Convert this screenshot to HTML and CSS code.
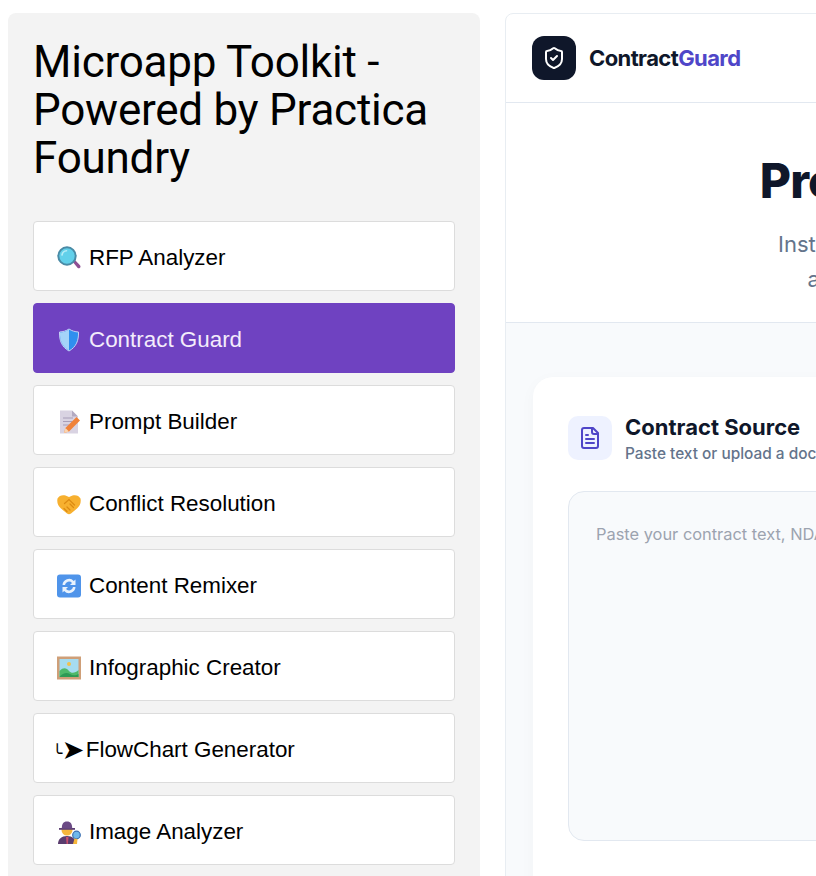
FILE: index.html
```html
<!DOCTYPE html>
<html lang="en">
<head>
<meta charset="utf-8">
<title>Microapp Toolkit</title>
<link rel="stylesheet" href="styles.css">
</head>
<body>
<div class="page">
  <aside class="sidebar">
    <h1 class="side-title">Microapp Toolkit - Powered by Practica Foundry</h1>
    <nav class="tools">
      <a class="tool">
        <svg class="emoji" viewBox="0 0 24 24"><path d="M15 15l2-2 6 6.200c.7.800.6 1.800 0 2.500-.8.700-1.800.7-2.500 0z" fill="#8e4f93"/><circle cx="10" cy="10" r="8.700" fill="#62d0ea" stroke="#4a8ba6" stroke-width="2"/><path d="M5 9c.5-2.500 2.300-4 4.500-4.200" fill="none" stroke="#b5ecf7" stroke-width="1.600" stroke-linecap="round"/></svg>
        <span>RFP Analyzer</span>
      </a>
      <a class="tool active">
        <svg class="emoji" viewBox="0 0 24 24"><path d="M12 1c3 2 6 2.800 9.500 3 .3 8.500-2.300 15-9.500 19C4.800 19 2.200 12.500 2.500 4 6 3.800 9 3 12 1z" fill="#2f8fef" stroke="#c3cff5" stroke-width="1"/><path d="M12 1.500C9 3.400 6 4.300 3 4.500c-.3 8 2.400 14.300 9 18z" fill="#a5d3f9"/></svg>
        <span>Contract Guard</span>
      </a>
      <a class="tool">
        <svg class="emoji" viewBox="0 0 24 24"><path d="M3 .5h12l6 6v17H3z" fill="#d9d3e2"/><path d="M15 .5l6 6h-6z" fill="#b3aac2"/><path d="M6 8h10M6 11.500h9M6 15h6" stroke="#a79db8" stroke-width="1.200"/><path d="M7 23l1.400-5L19.500 7l3.500 3.500L12 21.600z" fill="#f0823a"/><path d="M7 23l1.400-5 3.600 3.600z" fill="#fbd5b0"/></svg>
        <span>Prompt Builder</span>
      </a>
      <a class="tool">
        <svg class="emoji" viewBox="0 0 24 24"><path d="M.5 6.500C2 3.500 5.500 2.500 8.500 3.500L12 5l3.500-1.500c3-1 6.500 0 8 3 .8 4-.5 7.500-3.500 10l-6 5c-1.300 1-2.700 1-4 0l-6-5C1 14 -.3 10.500.5 6.500z" fill="#f7b02f"/><path d="M7.500 11.500L12 7.500l5.500 5.500M10 15l3 3M7 16.500l3 3M13 12l3.500 3.500" fill="none" stroke="#dc8a12" stroke-width="1.200" stroke-linecap="round"/></svg>
        <span>Conflict Resolution</span>
      </a>
      <a class="tool">
        <svg class="emoji" viewBox="0 0 24 24"><rect x="0" y=".5" width="24" height="23" rx="3" fill="#4f94ea"/><path d="M5.500 11a6.500 6.500 0 0 1 11.300-4L18.500 5.500V11h-5.500l2-2A4 4 0 0 0 8 11z" fill="#e8f2fd"/><path d="M18.500 13a6.500 6.500 0 0 1-11.300 4l-1.700 1.500V13H11l-2 2a4 4 0 0 0 7-2z" fill="#e8f2fd"/></svg>
        <span>Content Remixer</span>
      </a>
      <a class="tool">
        <svg class="emoji" viewBox="0 0 24 24"><rect x="0" y=".5" width="24" height="23" fill="#cf9f78"/><rect x="2.500" y="3" width="19" height="18" fill="#a6dcf0"/><circle cx="12" cy="8" r="2" fill="#f3c04d"/><path d="M2.500 15c4-4 7-3 9.500 0s6.500 2 9.500-1v7h-19z" fill="#4fb96a"/><path d="M2.500 21c3-4 7.500-5 10.500-3s6 1.500 8.500 0v3z" fill="#2e9a55"/></svg>
        <span>Infographic Creator</span>
      </a>
      <a class="tool plain"><span class="hook">╰</span><span class="arrow">➤</span><span>FlowChart Generator</span></a>
      <a class="tool">
        <svg class="emoji" viewBox="0 0 24 24"><path d="M1 24c0-5 3.500-8 9-8s9 3 9 8z" fill="#5a3d6e"/><path d="M9 17h2.500l-.6 7H9.600z" fill="#c94f6d"/><circle cx="10" cy="10" r="5.500" fill="#f6b73c"/><path d="M2 8h16v1.800H2z" fill="#5c3f73"/><path d="M4.800 8.500c0-4.500 1.500-7 5.200-7s5.200 2.500 5.200 7z" fill="#6b4a85"/><circle cx="19.500" cy="15" r="3.800" fill="#6fb8ea" stroke="#3b6fb0" stroke-width="1.200"/><path d="M17.500 18.500l-1.500 5.500h4l.5-5z" fill="#f6b73c"/></svg>
        <span>Image Analyzer</span>
      </a>
    </nav>
  </aside>

  <main class="panel">
    <header class="topbar">
      <div class="logo">
        <svg class="logo-icon" viewBox="0 0 24 24" fill="none" stroke="#fff" stroke-width="2" stroke-linecap="round" stroke-linejoin="round"><path d="M20 13c0 5-3.500 7.500-7.660 8.950a1 1 0 0 1-.67-.01C7.500 20.500 4 18 4 13V6a1 1 0 0 1 1-1c2 0 4.500-1.200 6.240-2.720a1.170 1.170 0 0 1 1.520 0C14.510 3.810 17 5 19 5a1 1 0 0 1 1 1z"/><path d="M9 12l2 2 4-4"/></svg>
      </div>
      <div class="brand">Contract<span class="brand-accent">Guard</span></div>
    </header>
    <section class="hero">
      <h2 class="hero-title">Protect your contracts</h2>
      <p class="hero-sub">Instantly review contracts, spot hidden terms,<br>and get clear, actionable improvements.</p>
    </section>
    <section class="workspace">
      <div class="card">
        <div class="card-head">
          <div class="card-icon">
            <svg viewBox="0 0 24 24" fill="none" stroke="#4f46c8" stroke-width="2" stroke-linecap="round" stroke-linejoin="round"><path d="M15 2H6a2 2 0 0 0-2 2v16a2 2 0 0 0 2 2h12a2 2 0 0 0 2-2V7z"/><path d="M14 2v4a2 2 0 0 0 2 2h4"/><path d="M10 9H8M16 13H8M16 17H8"/></svg>
          </div>
          <div class="card-copy">
            <div class="card-title">Contract Source</div>
            <div class="card-sub">Paste text or upload a document to begin the analysis</div>
          </div>
        </div>
        <textarea class="source" placeholder="Paste your contract text, NDA, or agreement here..."></textarea>
      </div>
    </section>
  </main>
</div>
</body>
</html>
```

FILE: styles.css
```css
* { box-sizing: border-box; }
html, body { margin: 0; height: 100%; overflow: hidden; background: #fff; }
.page {
  display: flex;
  align-items: flex-start;
  gap: 25px;
  width: 1800px;
  padding: 13px 8px 0;
}
.sidebar {
  flex: none;
  width: 472px;
  height: 1000px;
  padding: 25px 25px 25px;
  background: #f3f3f3;
  border-radius: 8px;
}
.side-title {
  margin: 0 0 39px;
  font: 400 44px/48px Roboto, sans-serif;
  letter-spacing: -0.24px;
  color: #000;
}
.tools { display: flex; flex-direction: column; gap: 12px; }
.tool {
  display: flex;
  align-items: center;
  gap: 8px;
  height: 70px;
  padding: 3px 23px 0;
  background: #fff;
  border: 1px solid #dcdcdc;
  border-radius: 4px;
  font: 400 22.4px "Liberation Sans", Arial, sans-serif;
  color: #000;
}
.tool.active { background: #6f42c1; border-color: #6f42c1; color: #f3ecfb; }
.tool.plain { gap: 0; }
.hook { font-size: 17px; margin-top: 6px; font-family: "DejaVu Sans", sans-serif; margin-left: -5px; letter-spacing: -0.5px; }
.arrow { font-size: 27px; font-family: "DejaVu Sans", sans-serif; width: 24px; }
.emoji { flex: none; width: 24px; height: 24px; }
.panel {
  flex: none;
  width: 1020px;
  height: 1000px;
  background: #fff;
  border: 1px solid #e8edf2;
  border-radius: 8px;
  overflow: hidden;
  font-family: Inter, sans-serif;
}
.topbar {
  display: flex;
  align-items: center;
  gap: 13px;
  height: 89px;
  padding: 0 26px;
  border-bottom: 1px solid #e2e8f0;
}
.logo {
  display: flex;
  align-items: center;
  justify-content: center;
  width: 44px;
  height: 44px;
  background: #0f172a;
  border-radius: 12px;
}
.logo-icon { width: 24px; height: 24px; }
.brand { font-size: 22px; font-weight: 700; letter-spacing: -0.6px; color: #0f172a; }
.brand-accent { color: #4f46c8; }
.hero {
  height: 220px;
  padding-top: 48px;
  text-align: center;
  border-bottom: 1px solid #e2e8f0;
}
.hero-title { margin: 0 0 16px; font-size: 48px; line-height: 60px; font-weight: 800; letter-spacing: -1px; color: #0f172a; }
.hero-sub { margin: 0; font-size: 22px; line-height: 35px; color: #64748b; }
.workspace { padding: 54px 27px; background: #f8fafc; height: 700px; }
.card {
  padding: 39px 35px;
  height: 640px;
  background: #fff;
  border-radius: 20px;
  box-shadow: 0 4px 16px rgba(15, 23, 42, 0.03);
}
.card-head { display: flex; align-items: flex-start; gap: 13px; height: 44px; }
.card-icon {
  display: flex;
  align-items: center;
  justify-content: center;
  width: 44px;
  height: 44px;
  background: #eef2ff;
  border-radius: 10px;
}
.card-icon svg { width: 24px; height: 24px; }
.card-copy { margin-top: -1px; }
.card-title { font-size: 22px; line-height: 25px; font-weight: 700; color: #0f172a; }
.card-sub { font-size: 15.4px; line-height: 27px; font-weight: 500; color: #64748b; }
.source {
  display: block;
  width: 100%;
  height: 350px;
  margin-top: 31px;
  padding: 30px 27px;
  background: #f8fafc;
  border: 1px solid #e2e8f0;
  border-radius: 16px;
  resize: none;
  outline: none;
  font: 400 16.4px/24px Inter, sans-serif;
}
.source::placeholder { color: #9ca3af; opacity: 1; }
```
